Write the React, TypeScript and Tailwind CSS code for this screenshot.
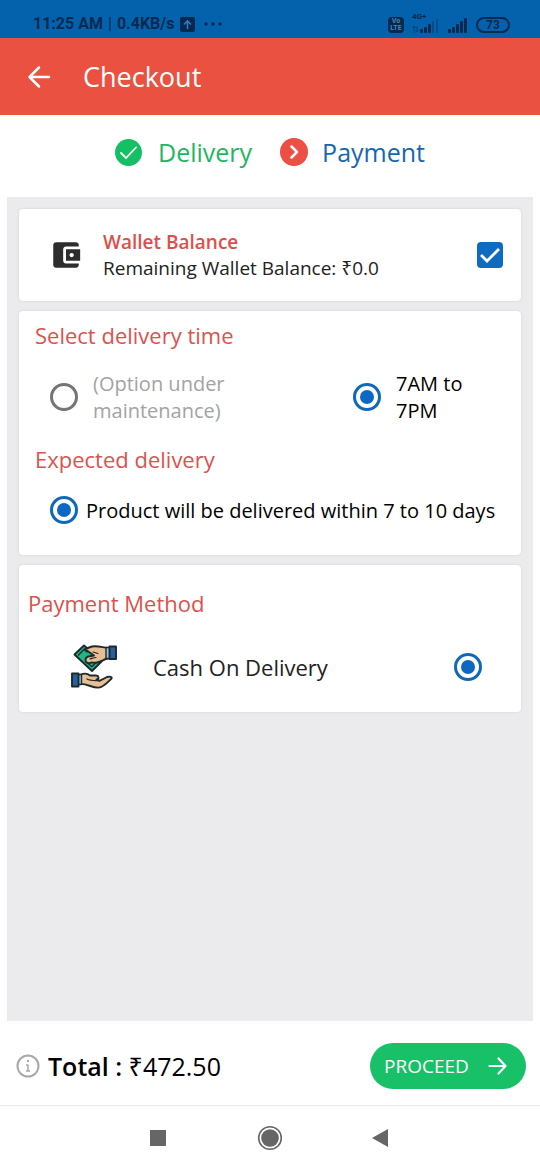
import { useState } from 'react'
import type { ReactNode } from 'react'

const radioClass =
  'appearance-none shrink-0 w-7 h-7 m-0 p-1 rounded-full border-3 border-[#757575] bg-clip-content checked:border-[#1068b8] checked:bg-[#0d68c4]'

function Card({ className, children }: { className: string; children: ReactNode }) {
  return (
    <section className={`bg-white rounded-sm shadow-[0_0_3px_rgba(0,0,0,0.1)] ${className}`}>
      {children}
    </section>
  )
}

function Signal() {
  return (
    <svg className="w-5 h-4" viewBox="0 0 20 16" fill="currentColor">
      <rect x="0" y="12" width="3" height="4" rx="1" />
      <rect x="4" y="10" width="3" height="6" rx="1" />
      <rect x="8" y="7" width="3" height="9" rx="1" />
      <rect x="12" y="4" width="3" height="12" rx="1" />
      <rect x="16" y="1" width="3" height="15" rx="1" />
    </svg>
  )
}

function StatusBar() {
  return (
    <div className="flex items-end justify-between h-[38px] pl-[33px] pr-[30px] pb-[5px] bg-[#0362ab] text-[#06294f] font-[Roboto,sans-serif]">
      <div className="flex items-center text-base leading-[18px] font-bold">
        <span>11:25 AM</span>
        <span className="mx-[5px] font-normal">|</span>
        <span>0.4KB/s</span>
        <svg className="w-[15px] h-[15px] ml-[6px]" viewBox="0 0 15 15">
          <rect width="15" height="15" rx="2" fill="currentColor" />
          <path d="M7.5 12V4M4 7.5 7.5 4 11 7.5" fill="none" stroke="#2f7ab8" strokeWidth="1.6" />
        </svg>
        <svg className="w-5 h-1 ml-2" viewBox="0 0 20 4" fill="currentColor">
          <circle cx="3" cy="2" r="1.7" />
          <circle cx="10" cy="2" r="1.7" />
          <circle cx="17" cy="2" r="1.7" />
        </svg>
      </div>
      <div className="flex items-center gap-2">
        <div className="flex flex-col items-center justify-center w-4 h-4 rounded-sm bg-[#06294f] text-[#4d86b8] text-[7px] leading-[7px] font-bold">
          <span>Vo</span>
          <span>LTE</span>
        </div>
        <div className="relative flex items-end justify-end w-7 h-4">
          <span className="absolute left-0 -top-1 text-[8px] leading-[8px] font-bold">4G+</span>
          <svg className="w-2 h-2" viewBox="0 0 8 8" fill="none" stroke="currentColor" opacity="0.6">
            <path d="M2 8V1M0.5 2.5 2 1l1.500 1.500M5 1v6M3.500 5.500 5 7l1.500-1.500" />
          </svg>
          <svg className="w-5 h-[14px]" viewBox="0 0 20 14" fill="currentColor">
            <rect x="0" y="10" width="3" height="4" rx="1" />
            <rect x="4" y="8" width="3" height="6" rx="1" />
            <rect x="8" y="5" width="3" height="9" rx="1" />
            <rect x="12" y="2" width="2" height="12" rx="1" opacity="0.35" />
            <rect x="16" y="0" width="2" height="14" rx="1" opacity="0.35" />
          </svg>
        </div>
        <Signal />
        <span className="flex items-center justify-center w-[34px] h-4 rounded-full border-2 border-current text-xs leading-3 font-bold">
          73
        </span>
      </div>
    </div>
  )
}

function CashIcon() {
  return (
    <svg className="w-[46px] h-[46px] shrink-0" viewBox="0 0 46 46" stroke="#1c2a30" strokeWidth="1.9" strokeLinejoin="round" strokeLinecap="round">
      <path d="M3.500 10.500 13 1.500 31 17 21 27Z" fill="#1fb584" />
      <path d="M7.500 11 13 5.500l3 2.500M20.500 22.500 15 17.500M21 22.500l5-5" fill="none" strokeWidth="1.400" />
      <path d="M14 5 21 2.500c5-1 9 .5 16 1.500v10.500c-4 .5-6 3-11 4-3 .7-5-.5-7 .3-2 .8-4.500-.3-4.500-2.600 0-2.200 1.600-3.700 4-4L23 11.500l-5-3.500Z" fill="#e8be92" />
      <path d="m22 8 5 1.500M19 15c2-.5 3.500-1.500 6-1.500" fill="none" strokeWidth="1.100" />
      <path d="M35 3.500h4v11h-4Z" fill="#8cc7e8" strokeWidth="1.400" />
      <path d="M38.500 2.500H45V15h-6.500Z" fill="#27609d" />
      <path d="M9 31c4-2 7-2 10 .5h6c3 .3 3.500 3.500.5 4l3 1.300 7.500-3.800c3-1 5.500 0 4.500 1.500-3 3-8 8.700-13 9.100-6 .5-10-3.500-18-3.700Z" fill="#e8be92" />
      <path d="M16 35c3 1.700 7 1.700 12 1.500" fill="none" strokeWidth="1.300" />
      <path d="M7 30.500h3.500v10H7Z" fill="#8cc7e8" strokeWidth="1.400" />
      <path d="M1 29.500h6.500v13H1Z" fill="#27609d" />
    </svg>
  )
}

export default function App() {
  const [useWallet, setUseWallet] = useState(true)

  return (
    <div className="flex flex-col min-h-screen bg-white text-[#222] font-['Open_Sans','Noto_Sans',sans-serif]">
      <StatusBar />

      <header className="flex items-center gap-[31px] h-[77px] px-[26px] bg-[#eb5141] text-white">
        <button type="button" aria-label="Back">
          <svg className="w-[26px] h-[26px]" viewBox="0 0 26 26" fill="none" stroke="currentColor" strokeWidth="2.500" strokeLinecap="round" strokeLinejoin="round">
            <path d="M13 3.500 3.500 13l9.500 9.500M3.500 13h19.500" />
          </svg>
        </button>
        <h1 className="text-[27px] leading-9">Checkout</h1>
      </header>

      <div className="flex items-center justify-center gap-7 h-[82px] pb-2 text-[25px] leading-9">
        <div className="flex items-center gap-4 text-[#1fb561]">
          <svg className="w-[27px] h-[27px]" viewBox="0 0 27 27">
            <circle cx="13.500" cy="13.500" r="13.500" fill="#15c064" />
            <path d="m6 14 5 5L21 8.500" fill="none" stroke="#fff" strokeWidth="1.800" strokeLinecap="round" />
          </svg>
          Delivery
        </div>
        <div className="flex items-center gap-[14px] text-[#1767b0]">
          <svg className="w-7 h-7" viewBox="0 0 28 28">
            <circle cx="14" cy="14" r="14" fill="#ec4f43" />
            <path d="m11.500 8.500 5.500 5.500-5.500 5.500" fill="none" stroke="#fff" strokeWidth="2.500" strokeLinecap="round" strokeLinejoin="round" />
          </svg>
          Payment
        </div>
      </div>

      <main className="flex flex-col flex-1 gap-[10px] mx-[7px] p-3 bg-[#ebebed]">
        <Card className="flex items-center h-[92px] pl-[30px] pr-[18px]">
          <svg className="w-[34px] h-[34px] shrink-0" viewBox="0 0 24 24" fill="#2d2d2d">
            <path d="M21 18v1c0 1.100-.9 2-2 2H5c-1.110 0-2-.9-2-2V5c0-1.100.89-2 2-2h14c1.100 0 2 .9 2 2v1h-9c-1.110 0-2 .9-2 2v8c0 1.100.89 2 2 2h9zm-9-2h10V8H12v8zm4-2.500c-.83 0-1.500-.67-1.500-1.500s.67-1.500 1.500-1.500 1.500.67 1.500 1.500-.67 1.500-1.500 1.500z" />
          </svg>
          <label htmlFor="wallet" className="flex-1 ml-5 text-[19px] leading-[26px]">
            <span className="block font-semibold text-[#dd5049]">Wallet Balance</span>
            <span className="block">Remaining Wallet Balance: ₹0.0</span>
          </label>
          <span className="grid">
            <input
              id="wallet"
              type="checkbox"
              checked={useWallet}
              onChange={(e) => setUseWallet(e.target.checked)}
              className="[grid-area:1/1] appearance-none w-[26px] h-[26px] rounded-sm border-3 border-[#757575] checked:border-[#0d6cc0] checked:bg-[#0d6cc0]"
            />
            {useWallet && (
              <svg className="[grid-area:1/1] w-[26px] h-[26px] pointer-events-none" viewBox="0 0 26 26">
                <path d="m4 13 6 6L22 7" fill="none" stroke="#fff" strokeWidth="2.800" />
              </svg>
            )}
          </span>
        </Card>

        <Card className="px-4 pt-[9px] pb-[31px] text-black">
          <h2 className="text-[22px] leading-[30px] text-[#d9534f]">Select delivery time</h2>
          <div className="flex items-center justify-between mt-5 pl-[15px] pr-7 text-[20px] leading-[27px]">
            <label className="flex items-center gap-[15px] w-[190px] text-[#a3a3a3]">
              <input type="radio" name="time" className={radioClass} />
              (Option under maintenance)
            </label>
            <label className="flex items-center gap-[15px] w-[124px]">
              <input type="radio" name="time" defaultChecked className={radioClass} />
              7AM to 7PM
            </label>
          </div>
          <h2 className="mt-5 text-[22px] leading-[30px] text-[#d9534f]">Expected delivery</h2>
          <label className="flex items-center gap-2 mt-[22px] pl-[15px] text-[20px] leading-[27px]">
            <input type="radio" name="expected" defaultChecked className={radioClass} />
            Product will be delivered within 7 to 10 days
          </label>
        </Card>

        <Card className="px-[9px] pt-[23px] pb-[22px]">
          <h2 className="text-[22px] leading-[30px] text-[#d9534f]">Payment Method</h2>
          <div className="flex items-center mt-[26px] pl-[43px] pr-[30px]">
            <CashIcon />
            <label htmlFor="cod" className="flex-1 ml-9 text-[22px] leading-[30px]">
              Cash On Delivery
            </label>
            <input id="cod" type="radio" name="method" defaultChecked className={radioClass} />
          </div>
        </Card>
      </main>

      <footer className="flex items-center justify-between h-[84px] pl-4 pr-[14px] pt-[6px]">
        <div className="flex items-center gap-2 text-[25px] leading-9 text-black">
          <svg className="w-6 h-6" viewBox="0 0 24 24" fill="none" stroke="#a8a8a8" strokeWidth="2">
            <circle cx="12" cy="12" r="10.500" />
            <path d="M12 10.500V17M10 11h2M10 17h4" strokeWidth="1.500" />
            <circle cx="12" cy="7" r="1.200" fill="#a8a8a8" stroke="none" />
          </svg>
          <p>
            <span className="font-semibold">Total :</span> ₹472.50
          </p>
        </div>
        <button type="button" className="flex items-center justify-between w-[156px] h-[46px] pl-[14px] pr-[18px] rounded-full bg-[#18c067] text-white text-[19px] leading-[26px]">
          PROCEED
          <svg className="w-5 h-5" viewBox="0 0 20 20" fill="none" stroke="currentColor" strokeWidth="2.200" strokeLinecap="round" strokeLinejoin="round">
            <path d="M1.500 10h16M10.500 2.500 17.500 10l-7 7.500" />
          </svg>
        </button>
      </footer>

      <nav className="flex items-center justify-center gap-[84px] h-[65px] border-t border-[#ebebeb] text-[#666]">
        <button type="button" aria-label="Recent apps">
          <svg className="w-7 h-7" viewBox="0 0 28 28" fill="currentColor">
            <rect x="6" y="6" width="16" height="16" />
          </svg>
        </button>
        <button type="button" aria-label="Home">
          <svg className="w-7 h-7" viewBox="0 0 28 28" fill="currentColor">
            <circle cx="14" cy="14" r="11.300" fill="none" stroke="currentColor" strokeWidth="1.600" />
            <circle cx="14" cy="14" r="8.800" />
          </svg>
        </button>
        <button type="button" aria-label="Back to previous app">
          <svg className="w-7 h-7" viewBox="0 0 28 28" fill="currentColor">
            <path d="M4 14 20 5v18Z" />
          </svg>
        </button>
      </nav>
    </div>
  )
}
